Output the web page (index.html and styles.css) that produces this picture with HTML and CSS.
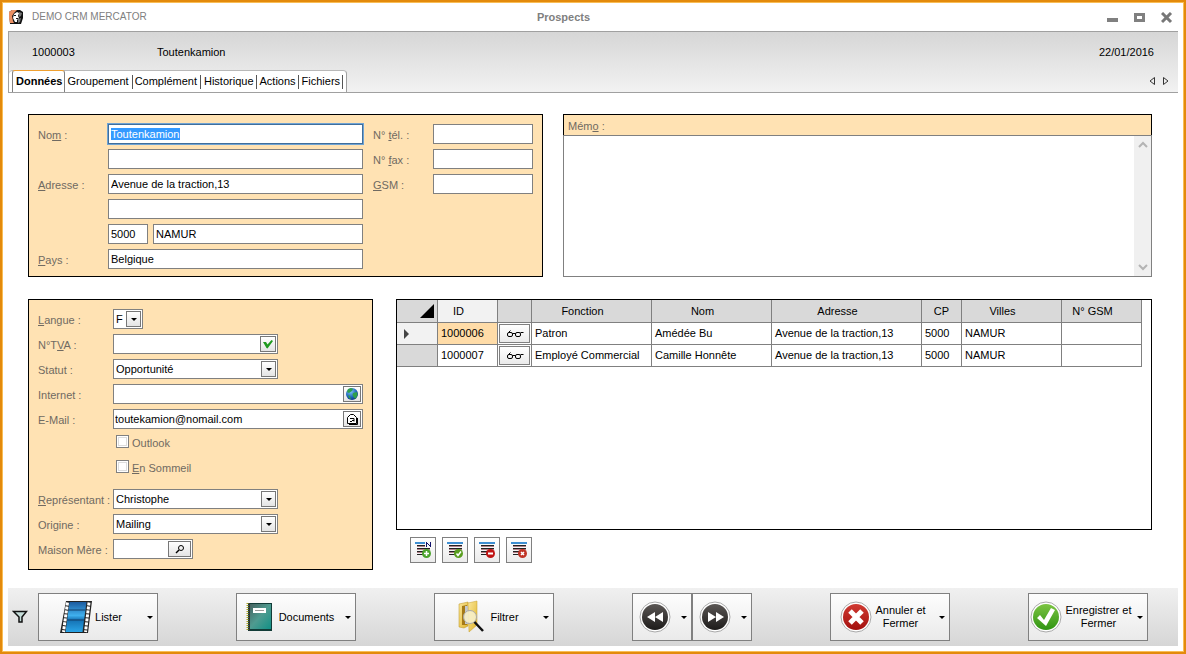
FILE: index.html
```html
<!DOCTYPE html>
<html lang="fr">
<head>
<meta charset="utf-8">
<title>Prospects</title>
<link rel="stylesheet" href="styles.css">
</head>
<body>
<svg class="defs" aria-hidden="true">
  <defs>
    <linearGradient id="film" x1="0" y1="0" x2="0" y2="1"><stop offset="0" stop-color="#1b5a9e"/><stop offset=".45" stop-color="#3fb0ee"/><stop offset=".6" stop-color="#1572b4"/><stop offset="1" stop-color="#2aa4e6"/></linearGradient>
    <linearGradient id="book" x1="0" y1="0" x2="1" y2="1"><stop offset="0" stop-color="#46605e"/><stop offset=".5" stop-color="#4f9b90"/><stop offset="1" stop-color="#129086"/></linearGradient>
    <linearGradient id="folder" x1="0" y1="0" x2="1" y2="1"><stop offset="0" stop-color="#fbe79a"/><stop offset="1" stop-color="#e0b52c"/></linearGradient>
    <linearGradient id="dark" x1="0" y1="0" x2="0" y2="1"><stop offset="0" stop-color="#5a5654"/><stop offset="1" stop-color="#1d1b1a"/></linearGradient>
    <linearGradient id="red" x1="0" y1="0" x2="0" y2="1"><stop offset="0" stop-color="#d03a32"/><stop offset="1" stop-color="#a3100e"/></linearGradient>
    <linearGradient id="green" x1="0" y1="0" x2="0" y2="1"><stop offset="0" stop-color="#7cc442"/><stop offset="1" stop-color="#2f9412"/></linearGradient>
    <radialGradient id="sea" cx=".4" cy=".3" r=".8"><stop offset="0" stop-color="#7cc4f4"/><stop offset=".6" stop-color="#1c62b8"/><stop offset="1" stop-color="#0a2c70"/></radialGradient>
    <symbol id="glasses" viewBox="0 0 18 10"><g fill="none" stroke="#000"><rect x="1.500" y="3.500" width="5" height="4" rx="1.500"/><rect x="9.500" y="3.500" width="5" height="4" rx="1.500"/><path d="M6.500 4.500h3M2.500 3.500l2-2M14.500 3.500h3"/></g></symbol>
    <symbol id="lines" viewBox="0 0 18 18"><path d="M1 1h16v2H1z" fill="#3f8fd2"/><path d="M3 4h13v1H3zM3 7h13v1H3zM3 10h10v1H3zM3 13h8v1H3z" fill="#222"/><path d="M3 5h13v1H3zM3 8h13v1H3zM3 11h8v1H3z" fill="#b08088"/></symbol>
  </defs>
</svg>

<div class="window">
  <header class="titlebar">
    <div class="app">
      <svg width="16" height="16" viewBox="0 0 16 16" aria-hidden="true"><path d="M1 3l3-2h8l3 2v6l-2 6H2z" fill="#111"/><path d="M1 3l3-2h5L6 4 4 7l1 5 1 2H2L1 9z" fill="#e98f63"/><path d="M6 5l3-2 2 1-1 3 1 2-2 2v2H7L5 9z" fill="#fff"/><path d="M6 6h2v1H6zM8 9h2v1H8z" fill="#111"/><path d="M11 3l3 1-1 3-2 1zM10 10l3-1-1 4-2 1z" fill="#777"/></svg>
      <span>DEMO CRM MERCATOR</span>
    </div>
    <h1>Prospects</h1>
    <div class="winbtns">
      <button type="button" aria-label="Réduire"><svg width="12" height="12"><path d="M0 6h11v4H0z" fill="#808080"/></svg></button>
      <button type="button" aria-label="Agrandir"><svg width="12" height="12"><path d="M0 1h11v9H0zM3 4v3h5v-3z" fill="#808080" fill-rule="evenodd"/></svg></button>
      <button type="button" aria-label="Fermer"><svg width="12" height="12"><path d="M1 1l9 9M10 1l-9 9" stroke="#777" stroke-width="3"/></svg></button>
    </div>
  </header>

  <section class="record">
    <div class="ident"><span class="code">1000003</span><span>Toutenkamion</span><time datetime="2016-01-22">22/01/2016</time></div>
    <div class="tabrow">
      <nav class="tabs" role="tablist">
        <button type="button" role="tab" class="tab active" aria-selected="true">Données</button>
        <button type="button" role="tab" class="tab spaced">Groupement</button>
        <button type="button" role="tab" class="tab spaced">Complément</button>
        <button type="button" role="tab" class="tab">Historique</button>
        <button type="button" role="tab" class="tab">Actions</button>
        <button type="button" role="tab" class="tab">Fichiers</button>
      </nav>
      <div class="scroller">
        <button type="button" aria-label="Onglet précédent"><svg width="8" height="10"><path d="M6.500 1.500v7L2 5z" fill="none" stroke="#333"/></svg></button>
        <button type="button" aria-label="Onglet suivant"><svg width="8" height="10"><path d="M1.500 1.500v7L6 5z" fill="none" stroke="#333"/></svg></button>
      </div>
    </div>
  </section>

  <main>
    <div class="top">
      <form class="panel contact">
        <div class="fields address">
          <label for="nom">No<u>m</u> :</label><input id="nom" class="field focused" value="Toutenkamion">
          <span></span><input class="field" aria-label="Nom, suite">
          <label for="adr"><u>A</u>dresse :</label><input id="adr" class="field" value="Avenue de la traction,13">
          <span></span><input class="field" aria-label="Adresse, suite">
          <span></span><div class="city"><input class="field" aria-label="Code postal" value="5000"><input class="field" aria-label="Ville" value="NAMUR"></div>
          <label for="pays"><u>P</u>ays :</label><input id="pays" class="field" value="Belgique">
        </div>
        <div class="fields phones">
          <label for="tel">N° <u>t</u>él. :</label><input id="tel" class="field">
          <label for="fax">N° <u>f</u>ax :</label><input id="fax" class="field">
          <label for="gsm"><u>G</u>SM :</label><input id="gsm" class="field">
        </div>
      </form>
      <section class="memo">
        <label for="memo">Mém<u>o</u> :</label>
        <div class="memobox">
          <textarea id="memo"></textarea>
          <div class="track" aria-hidden="true">
            <svg width="10" height="8"><path d="M1 6l4-4 4 4" fill="none" stroke="#b4b4b4" stroke-width="2"/></svg>
            <svg width="10" height="8"><path d="M1 2l4 4 4-4" fill="none" stroke="#b4b4b4" stroke-width="2"/></svg>
          </div>
        </div>
      </section>
    </div>

    <div class="bottom">
      <form class="panel details">
        <label for="langue"><u>L</u>angue :</label>
        <div class="combo tiny"><select id="langue"><option>F</option></select><i class="drop"></i></div>
        <label for="tva">N°T<u>V</u>A :</label>
        <div class="combo medium"><input id="tva"><button type="button" class="act check" aria-label="Vérifier"><svg width="12" height="10" viewBox="0 0 12 10"><path d="M1 3h3l1.500 2.500L9.500 1 11 2 5.500 9.500 4.500 9z" fill="#1f9a1f"/></svg></button></div>
        <label for="statut">Statut :</label>
        <div class="combo medium"><select id="statut"><option>Opportunité</option></select><i class="drop"></i></div>
        <label for="net">Internet :</label>
        <div class="combo"><input id="net"><button type="button" class="act" aria-label="Ouvrir le site"><svg width="14" height="14" viewBox="0 0 14 14"><circle cx="7" cy="7" r="6" fill="url(#sea)"/><path d="M3 2l3-1 2 1-1 2-3 2-2-1zM8 6l4-1 .5 3-2 4-2-2-1-2zM3 8l2 1 1 3-2-1z" fill="#2fa04a"/></svg></button></div>
        <label for="mail">E-Mail :</label>
        <div class="combo"><input id="mail" value="toutekamion@nomail.com"><button type="button" class="act" aria-label="Envoyer un e-mail"><svg width="14" height="14" viewBox="0 0 14 14"><path d="M2.500 5.500l3-3h3l3 3v6h-9z" fill="#fff" stroke="#000"/><path d="M4 12.500h8.500V6M5 6.500h4v3M5 9.500h2M7 8.500h2" stroke="#000" fill="none"/></svg></button></div>
        <label class="tick"><input type="checkbox"><span>Outlook</span></label>
        <label class="tick last"><input type="checkbox"><span><u>E</u>n Sommeil</span></label>
        <label for="rep"><u>R</u>eprésentant :</label>
        <div class="combo medium"><select id="rep"><option>Christophe</option></select><i class="drop"></i></div>
        <label for="orig">Origine :</label>
        <div class="combo medium"><select id="orig"><option>Mailing</option></select><i class="drop"></i></div>
        <label for="mere">Maison Mère :</label>
        <div class="combo small"><input id="mere"><button type="button" class="act wide" aria-label="Rechercher"><svg width="12" height="10"><circle cx="7" cy="4" r="2.500" fill="none" stroke="#000"/><path d="M5 6L2 9" stroke="#000" stroke-width="1.500"/></svg></button></div>
      </form>

      <section class="people">
        <div class="gridbox">
          <table>
            <colgroup><col class="w41"><col class="w60"><col class="w34"><col class="w120"><col class="w120"><col class="w150"><col class="w40"><col class="w100"><col class="w80"></colgroup>
            <thead><tr><th class="corner"><svg width="14" height="14" aria-hidden="true"><path d="M14 0v14H0z"/></svg></th><th class="lit">ID</th><th></th><th>Fonction</th><th>Nom</th><th>Adresse</th><th class="tight">CP</th><th>Villes</th><th>N° GSM</th></tr></thead>
            <tbody>
              <tr><td class="rowhead lit"><svg width="6" height="10" aria-hidden="true"><path d="M1 0l5 5-5 5z" fill="#444"/></svg></td><td class="current">1000006</td><td class="look"><button type="button" aria-label="Voir Amédée Bu"><svg width="18" height="10"><use href="#glasses"/></svg></button></td><td>Patron</td><td>Amédée Bu</td><td>Avenue de la traction,13</td><td>5000</td><td>NAMUR</td><td></td></tr>
              <tr><td class="rowhead"></td><td>1000007</td><td class="look"><button type="button" aria-label="Voir Camille Honnête"><svg width="18" height="10"><use href="#glasses"/></svg></button></td><td>Employé Commercial</td><td>Camille Honnête</td><td>Avenue de la traction,13</td><td>5000</td><td>NAMUR</td><td></td></tr>
            </tbody>
          </table>
        </div>
        <div class="rowtools">
          <button type="button" aria-label="Nouveau"><svg width="18" height="18"><use href="#lines"/><path d="M11 0h7v6h-7z" fill="#f8f8f8"/><path d="M12 1h1v1h1v1h1v1h1V1h1v5h-1V5h-1V4h-1V3h-1v3h-1z" fill="#10106a"/><circle cx="12.500" cy="12.500" r="4.500" fill="#4ba32c"/><path d="M10 12.500h5M12.500 10v5" stroke="#fff" stroke-width="1.500"/></svg></button>
          <button type="button" aria-label="Valider"><svg width="18" height="18"><use href="#lines"/><circle cx="12.500" cy="12.500" r="4.500" fill="#5a9e20"/><path d="M10.500 12.500l1.500 2 3-4" fill="none" stroke="#fff" stroke-width="1.500"/></svg></button>
          <button type="button" aria-label="Retirer"><svg width="18" height="18"><use href="#lines"/><circle cx="12.500" cy="12.500" r="4.500" fill="#c01414"/><path d="M10 12.500h5" stroke="#fff" stroke-width="2"/></svg></button>
          <button type="button" aria-label="Supprimer"><svg width="18" height="18"><use href="#lines"/><circle cx="12.500" cy="12.500" r="4.500" fill="#c03426"/><path d="M11 11l3 3M14 11l-3 3" stroke="#fff" stroke-width="1.500"/></svg></button>
        </div>
      </section>
    </div>
  </main>

  <footer>
    <button type="button" class="filter" aria-label="Filtre"><svg width="16" height="14"><path d="M1.500 1.500h13L10 7v5H7V7z" fill="#c5dcd8" stroke="#111" stroke-width="1.500"/></svg></button>
    <div class="actions">
      <button type="button" class="big"><span class="face">
        <svg width="32" height="34" viewBox="0 0 32 34"><path d="M6 1h26l-4 32H0z" fill="#222"/><path d="M9.500 2h17l-4 30h-17z" fill="url(#film)"/><path d="M8 10h17M7 20h17" stroke="#123c66"/><path d="M7.500 2.500L3.500 32M29 2.500L25.500 32" stroke="#fff" stroke-width="3" stroke-dasharray="3 1"/></svg>
        <span>Lister</span></span><i class="arrow"></i></button>
      <button type="button" class="big"><span class="face">
        <svg width="32" height="32" viewBox="0 0 32 32"><path d="M4 2h24v28H4z" fill="#123c38"/><path d="M5 3h22v25H5z" fill="url(#book)"/><path d="M9 7h13v5H9z" fill="#fff"/><path d="M11 9.500h9" stroke="#999"/><path d="M3.500 2v28" stroke="#a8a02a" stroke-width="2" stroke-dasharray="1 1"/><path d="M5.500 2v28" stroke="#333"/></svg>
        <span>Documents</span></span><i class="arrow"></i></button>
      <button type="button" class="big"><span class="face">
        <svg width="32" height="34" viewBox="0 0 32 34"><path d="M4 4l9-2v24l-4 2-5-1z" fill="url(#folder)" stroke="#b8901f" stroke-width=".5"/><path d="M7 6l5-1v20H7z" fill="#a57a18"/><path d="M10 6h4v18h-4z" fill="#c4c8cc"/><path d="M13 3l9-2v24l-8 7z" fill="url(#folder)" stroke="#c69d2a" stroke-width=".5"/><circle cx="15" cy="17" r="6.500" fill="#f7efc9" fill-opacity=".9" stroke="#aaa"/><path d="M19.500 22l8.500 9" stroke="#111" stroke-width="2.500"/></svg>
        <span>Filtrer</span></span><i class="arrow"></i></button>
      <div class="pair">
        <button type="button" class="big half" aria-label="Précédent"><span class="face"><svg width="32" height="32"><circle cx="16" cy="16" r="15" fill="#fff" stroke="#aaa"/><circle cx="16" cy="16" r="13" fill="url(#dark)"/><path d="M16 11v10l-8-5zM24 11v10l-8-5z" fill="#fff"/></svg></span><i class="arrow"></i></button><button type="button" class="big half" aria-label="Suivant"><span class="face"><svg width="32" height="32"><circle cx="16" cy="16" r="15" fill="#fff" stroke="#aaa"/><circle cx="16" cy="16" r="13" fill="url(#dark)"/><path d="M9 11v10l8-5zM17 11v10l8-5z" fill="#fff"/></svg></span><i class="arrow"></i></button>
      </div>
      <button type="button" class="big"><span class="face">
        <svg width="32" height="32"><circle cx="16" cy="16" r="15" fill="#fff" stroke="#aaa"/><circle cx="16" cy="16" r="13" fill="url(#red)"/><path d="M10 10l12 12M22 10l-12 12" stroke="#fff" stroke-width="5"/></svg>
        <span>Annuler et<br>Fermer</span></span><i class="arrow"></i></button>
      <button type="button" class="big"><span class="face">
        <svg width="32" height="32"><circle cx="16" cy="16" r="15" fill="#fff" stroke="#aaa"/><circle cx="16" cy="16" r="13" fill="url(#green)"/><path d="M7 17l3-3 4 5 7-12 4 2-9 16z" fill="#fff"/></svg>
        <span>Enregistrer et<br>Fermer</span></span><i class="arrow"></i></button>
    </div>
  </footer>
</div>
<script src="script.js"></script>
</body>
</html>
```
FILE: styles.css
```css
* { box-sizing: border-box; }
body { margin: 0; color: #000; background: #fff; }
body, button, input, select, textarea { font: 11px/13px "Liberation Sans", Arial, sans-serif; }
button { padding: 0; border: 0; background: none; color: inherit; }
svg { display: block; flex: none; }
.defs { position: absolute; width: 0; height: 0; }

.window { min-height: 100vh; display: flex; flex-direction: column; padding: 0 5px 6px; border: 2px solid #e38a0c; box-shadow: inset 0 0 0 1px #f9bd55; }

.titlebar { display: grid; grid-template-columns: minmax(0, 1fr) auto minmax(0, 1fr); align-items: center; height: 29px; padding: 0 6px 0 1px; color: #808080; }
.app { display: flex; align-items: center; gap: 8px; font-size: 10px; }
h1 { margin: 0; padding: 1px 54px 0 0; font-size: 11px; }
.winbtns { display: flex; justify-content: flex-end; gap: 15px; padding-top: 2px; }

.record { display: flex; flex-direction: column; justify-content: space-between; height: 62px; margin: 0 1px; border: 1px solid #a0a0a0; border-right: 0; background: linear-gradient(#d6d6d6, #f2f2f2); }
.ident { display: flex; padding: 14px 24px 0 23px; }
.code { width: 125px; }
.ident time { margin-left: auto; }
.tabrow { display: flex; justify-content: space-between; align-items: center; }
.tabs { display: flex; align-items: center; height: 22px; padding: 0 3px; background: #fff; border-top: 1px solid #b8b8b8; border-right: 1px solid #a0a0a0; border-radius: 4px 4px 0 0; }
.tab { height: 14px; padding: 0 2px 0 3px; border-right: 1px solid #555; }
.tab.spaced { padding: 0 3px 0 2px; }
.tab.active { height: 22px; margin-top: -1px; font-weight: bold; background: #fff; border: 1px solid #808080; border-top-color: #f0a030; border-bottom: 0; border-radius: 3px 3px 0 0; }
.scroller { display: flex; gap: 6px; padding-right: 8px; }

main { flex: 1; display: flex; flex-direction: column; gap: 22px; padding: 21px 27px 18px 21px; }
.panel { background: #ffe2b3; border: 1px solid #000; padding: 9px 9px 7px; color: #706a62; }
.panel label { padding-top: 2px; }
.top { display: grid; grid-template-columns: 515px minmax(0, 1fr); gap: 20px; }
.contact { display: flex; align-items: flex-start; gap: 10px; }
.fields { display: grid; row-gap: 5px; align-items: center; }
.address { grid-template-columns: 70px minmax(0, 1fr); flex: 1; }
.phones { grid-template-columns: 60px 100px; }
.field { width: 100%; min-width: 0; height: 20px; padding: 0 2px; border: 1px solid #808080; border-radius: 0; background: #fff; color: #000; }
.focused { border-color: #3f6e9c; outline: 1px solid #6fa3d4; }
::selection { background: #3399ff; color: #fff; }
.city { display: grid; grid-template-columns: 40px minmax(0, 1fr); gap: 5px; }

.memo { display: flex; flex-direction: column; }
.memo > label { height: 21px; padding: 5px 4px; background: #ffe2b3; border: 1px solid #000; border-bottom: 0; color: #706a62; }
.memobox { flex: 1; display: flex; border: 1px solid #808080; }
textarea { flex: 1; border: 0; resize: none; overflow: hidden; outline: 0; }
.track { display: flex; flex-direction: column; align-items: center; justify-content: space-between; width: 17px; padding: 5px 2px; background: #f0f0f0; }

.bottom { flex: 1; display: grid; grid-template-columns: 345px minmax(0, 1fr); gap: 23px; }
.details { display: grid; grid-template-columns: 75px minmax(0, 1fr); align-content: start; align-items: center; row-gap: 5px; padding-bottom: 9px; white-space: nowrap; }
.combo { display: flex; align-items: center; height: 20px; background: #fff; border: 1px solid #808080; padding-right: 1px; color: #000; }
.combo input, .combo select { flex: 1; min-width: 0; height: 18px; padding: 0 2px; border: 0; background: none; appearance: none; outline: 0; color: #000; }
.combo input { padding: 0 1px; }
.tiny { width: 30px; }
.small { width: 80px; }
.medium { width: 165px; }
.drop, .act { display: flex; align-items: center; justify-content: center; flex: none; width: 15px; height: 16px; border: 1px solid #777; background: linear-gradient(#fff, #e4e4e4); pointer-events: none; }
.drop::before, .arrow::before { content: ""; border: 3px solid transparent; border-top-color: #000; border-bottom: 0; }
.act { width: 18px; pointer-events: auto; }
.act.check { width: 16px; }
.act.wide { width: 23px; }
.panel .tick { grid-column: 2; display: flex; gap: 3px; height: 20px; padding: 1px 0 0 3px; }
.tick.last { margin-bottom: 5px; }
.tick input { appearance: none; width: 13px; height: 13px; margin: 0; border: 1px solid #808080; background: #fff; box-shadow: inset 0 0 0 1px #fff, inset 0 0 0 2px #ddd; }
.tick input:checked { background: #333; }
.tick span { padding-top: 2px; }

.people { display: flex; flex-direction: column; gap: 7px; padding-bottom: 7px; }
.gridbox { flex: 1; border: 1px solid #000; overflow: hidden; }
table { table-layout: fixed; width: 745px; border-collapse: separate; border-spacing: 0; }
.w34 { width: 34px; }
.w40 { width: 40px; }
.w41 { width: 41px; }
.w60 { width: 60px; }
.w80 { width: 80px; }
.w100 { width: 100px; }
.w120 { width: 120px; }
.w150 { width: 150px; }
th, td { height: 22px; padding: 0 3px; border: solid #808080; border-width: 0 1px 1px 0; white-space: nowrap; text-align: left; font-weight: normal; }
th { height: 23px; padding: 0 18px 0 0; background: #d9d9d9; text-align: center; }
th.tight { padding: 0; }
th.corner { padding: 0 3px 0 0; }
.corner svg { margin-left: auto; }
.rowhead { padding-left: 6px; background: #d9d9d9; }
th.lit, td.lit { background: #f2f2f2; }
.current { background: #ffdca8; }
td.look { padding: 1px; }
.look button { display: flex; align-items: center; justify-content: center; width: 100%; height: 19px; border: 1px solid #808080; background: linear-gradient(#fff, #eaeaea); }
.rowtools { display: flex; gap: 6px; padding-left: 14px; }
.rowtools button { display: flex; align-items: center; justify-content: center; width: 26px; height: 26px; border: 1px solid #808080; background: linear-gradient(#fff, #ebebeb); }

footer { display: flex; align-items: center; margin: 0 1px; padding: 5px 30px 5px 4px; background: linear-gradient(#f0f0f0, #d6d6d6); }
.filter { width: 26px; }
.actions { flex: 1; display: flex; justify-content: space-between; }
.pair { display: flex; }
.big { display: flex; align-items: center; width: 120px; height: 48px; border: 1px solid #808080; background: linear-gradient(#fdfdfd, #eaeaea); }
.half { width: 60px; }
.face { flex: 1; display: flex; align-items: center; justify-content: center; gap: 3px; white-space: nowrap; }
.arrow { display: flex; justify-content: center; width: 14px; }
```
FILE: script.js
```js
const nameField = document.getElementById("nom");
nameField.focus();
nameField.select();
```
